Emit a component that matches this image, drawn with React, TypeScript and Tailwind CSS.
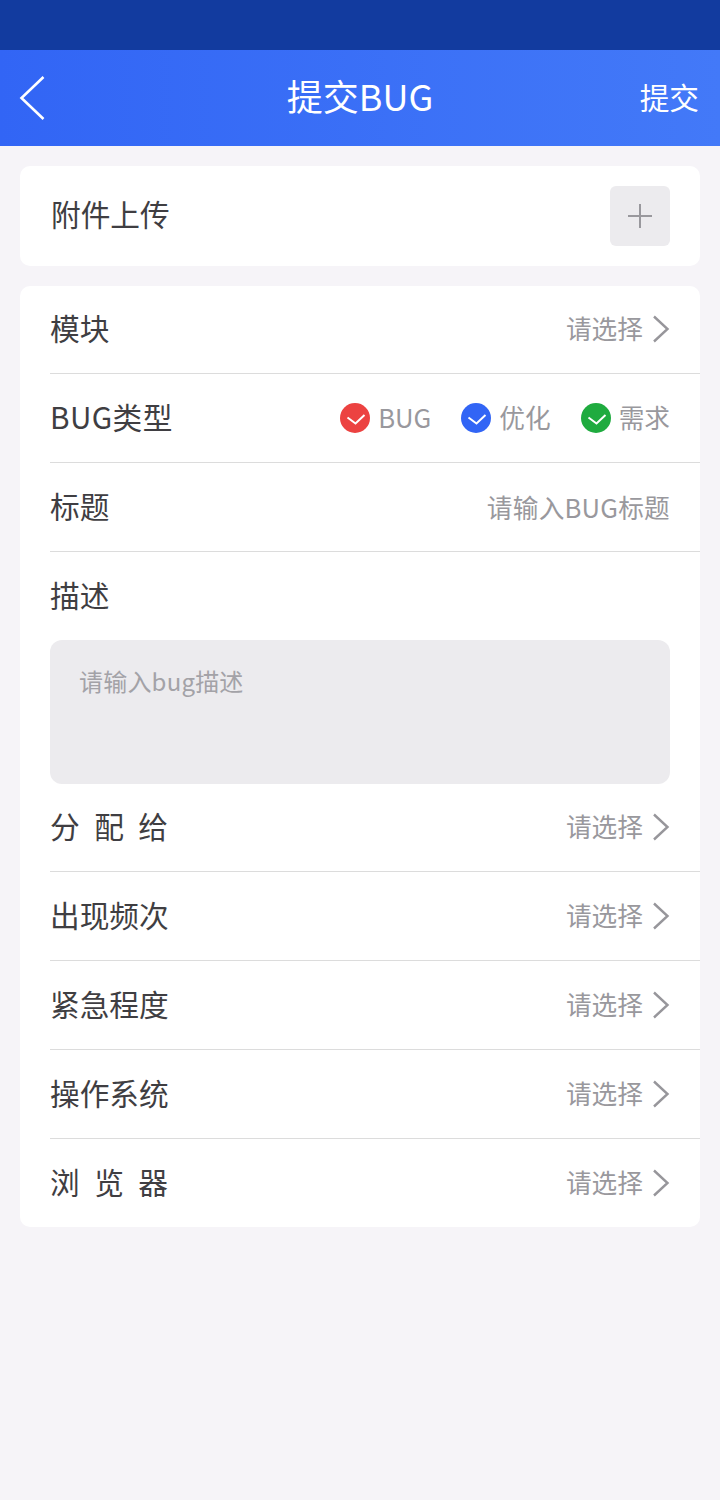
const Chevron = () => (
  <svg width="18" height="28" viewBox="0 0 18 28" fill="none" className="ml-[9px]">
    <path d="M2 1.5 L15.5 14 L2 26.5" stroke="#97969b" strokeWidth="2.4" />
  </svg>
);

const Row = ({ label }: { label: string }) => (
  <div className="h-[89px] flex items-center justify-between pr-[30px] border-b border-[#dcdcdc]">
    <span className="text-[29.7px] pb-[2px] text-[#3f3e42]">{label}</span>
    <div className="flex items-center">
      <span className="text-[25.7px] pb-[2px] text-[#99989d]">请选择</span>
      <Chevron />
    </div>
  </div>
);

const SpacedRow = ({ chars, last }: { chars: string[]; last?: boolean }) => (
  <div className={`h-[88px] flex items-center justify-between pr-[30px] ${last ? "" : "border-b border-[#dcdcdc]"}`}>
    <span className="w-[118px] pb-[2px] flex justify-between text-[29.7px] text-[#3f3e42]">
      {chars.map((c) => (
        <span key={c}>{c}</span>
      ))}
    </span>
    <div className="flex items-center">
      <span className="text-[25.7px] pb-[2px] text-[#99989d]">请选择</span>
      <Chevron />
    </div>
  </div>
);

const TypeOption = ({ label, color }: { label: string; color: string }) => (
  <div className="flex items-center gap-[8px]">
    <svg width="30" height="30" viewBox="0 0 30 30">
      <circle cx="15" cy="15" r="15" fill={color} />
      <path d="M7.5 14.5 L15.5 20.5 L24.5 12" stroke="#fff" strokeWidth="2" fill="none" />
    </svg>
    <span className="text-[25.7px] pb-[2px] text-[#99989d]">{label}</span>
  </div>
);

export default function App() {
  return (
    <div className="w-[720px] h-[1500px] bg-[#f6f4f8] font-['Noto_Sans_CJK_SC',sans-serif] overflow-hidden">
      <div className="h-[50px] bg-[#123b9f]" />
      <header className="relative h-[96px] flex items-center justify-center bg-gradient-to-r from-[#3265f5] to-[#4379f8] text-white">
        <svg width="28" height="46" viewBox="0 0 28 46" fill="none" className="absolute left-[18px] top-[25px]">
          <path d="M25.5 2 L3.5 23 L25.5 44" stroke="#fff" strokeWidth="2.6" />
        </svg>
        <span className="text-[36px] pb-[6px]">提交BUG</span>
        <span className="absolute right-[21px] pb-[2px] text-[29.7px]">提交</span>
      </header>

      <div className="px-[20px] pt-[20px] flex flex-col gap-[20px]">
        <section className="h-[100px] bg-white rounded-[10px] flex items-center justify-between pl-[31px] pr-[30px]">
          <span className="text-[29.7px] pb-[3px] text-[#3f3e42]">附件上传</span>
          <div className="w-[60px] h-[60px] rounded-[6px] bg-[#ecebee] flex items-center justify-center">
            <svg width="26" height="26" viewBox="0 0 26 26">
              <path d="M13 1 V25 M1 13 H25" stroke="#99989d" strokeWidth="2" />
            </svg>
          </div>
        </section>

        <section className="bg-white rounded-[10px] pl-[30px]">
          <div className="h-[88px] flex items-center justify-between pr-[30px] border-b border-[#dcdcdc]">
            <span className="text-[29.7px] pb-[2px] text-[#3f3e42]">模块</span>
            <div className="flex items-center">
              <span className="text-[25.7px] pb-[2px] text-[#99989d]">请选择</span>
              <Chevron />
            </div>
          </div>
          <div className="h-[89px] flex items-center justify-between pr-[30px] border-b border-[#dcdcdc]">
            <span className="text-[29.7px] pb-[2px] tracking-[0.4px] text-[#3f3e42]">BUG类型</span>
            <div className="flex items-center gap-[30px]">
              <TypeOption label="BUG" color="#ec4241" />
              <TypeOption label="优化" color="#3265f5" />
              <TypeOption label="需求" color="#1fab3f" />
            </div>
          </div>
          <div className="h-[89px] flex items-center justify-between pr-[30px] border-b border-[#dcdcdc]">
            <span className="text-[29.7px] pb-[2px] text-[#3f3e42]">标题</span>
            <span className="text-[25.7px] pt-[1px] tracking-[0.2px] text-[#99989d]">请输入BUG标题</span>
          </div>
          <div className="h-[88px] flex items-center">
            <span className="text-[29.7px] pb-[2px] text-[#3f3e42]">描述</span>
          </div>
          <div className="mr-[30px] h-[144px] rounded-[12px] bg-[#ecebee] px-[29px] py-[23px]">
            <p className="text-[24px] leading-[36px] tracking-[0.2px] text-[#a3a2a7]">请输入bug描述</p>
          </div>
          <SpacedRow chars={["分", "配", "给"]} />
          <Row label="出现频次" />
          <Row label="紧急程度" />
          <Row label="操作系统" />
          <SpacedRow chars={["浏", "览", "器"]} last />
        </section>
      </div>
    </div>
  );
}
